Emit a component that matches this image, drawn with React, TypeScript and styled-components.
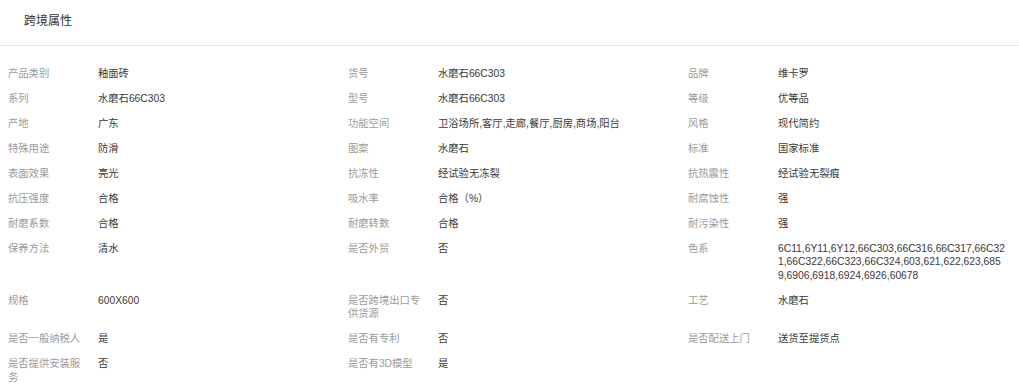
import React from "react";
import styled, { createGlobalStyle } from "styled-components";

const Global = createGlobalStyle`
  html, body { margin: 0; padding: 0; background: #fff; }
  body { font-family: "Liberation Sans", "Noto Sans CJK SC", sans-serif; }
`;

const Page = styled.div`
  width: 1019px;
  background: #fff;
`;

const Header = styled.div`
  height: 46px;
  border-bottom: 1px solid #e6e6e6;
  display: flex;
  align-items: center;
  padding-left: 24px;
  box-sizing: border-box;
  padding-bottom: 7px;
`;

const Title = styled.h3`
  margin: 0;
  font-size: 12px;
  font-weight: normal;
  color: #333;
`;

const Grid = styled.div`
  display: grid;
  grid-template-columns: repeat(3, 340px);
  padding: 15px 0 0 8px;
`;

const Cell = styled.div`
  display: grid;
  grid-template-columns: 90px 228px;
  padding: 5.75px 0;
  font-size: 10.3px;
  line-height: 13.5px;
`;

const Label = styled.div`
  color: #9a9a9a;
  padding-right: 12px;
`;

const Value = styled.div`
  color: #3a3a3a;
  word-break: break-all;
`;

const rows: [string, string][][] = [
  [["产品类别", "釉面砖"], ["货号", "水磨石66C303"], ["品牌", "维卡罗"]],
  [["系列", "水磨石66C303"], ["型号", "水磨石66C303"], ["等级", "优等品"]],
  [["产地", "广东"], ["功能空间", "卫浴场所,客厅,走廊,餐厅,厨房,商场,阳台"], ["风格", "现代简约"]],
  [["特殊用途", "防滑"], ["图案", "水磨石"], ["标准", "国家标准"]],
  [["表面效果", "亮光"], ["抗冻性", "经试验无冻裂"], ["抗热震性", "经试验无裂痕"]],
  [["抗压强度", "合格"], ["吸水率", "合格（%）"], ["耐腐蚀性", "强"]],
  [["耐磨系数", "合格"], ["耐磨转数", "合格"], ["耐污染性", "强"]],
  [
    ["保养方法", "清水"],
    ["是否外贸", "否"],
    ["色系", "6C11,6Y11,6Y12,66C303,66C316,66C317,66C321,66C322,66C323,66C324,603,621,622,623,6859,6906,6918,6924,6926,60678"],
  ],
  [["规格", "600X600"], ["是否跨境出口专供货源", "否"], ["工艺", "水磨石"]],
  [["是否一般纳税人", "是"], ["是否有专利", "否"], ["是否配送上门", "送货至提货点"]],
  [["是否提供安装服务", "否"], ["是否有3D模型", "是"], ["", ""]],
];

export default function App() {
  return (
    <Page>
      <Global />
      <Header>
        <Title>跨境属性</Title>
      </Header>
      <Grid>
        {rows.flat().map(([k, v], i) => (
          <Cell key={i}>
            <Label>{k}</Label>
            <Value>{v}</Value>
          </Cell>
        ))}
      </Grid>
    </Page>
  );
}
